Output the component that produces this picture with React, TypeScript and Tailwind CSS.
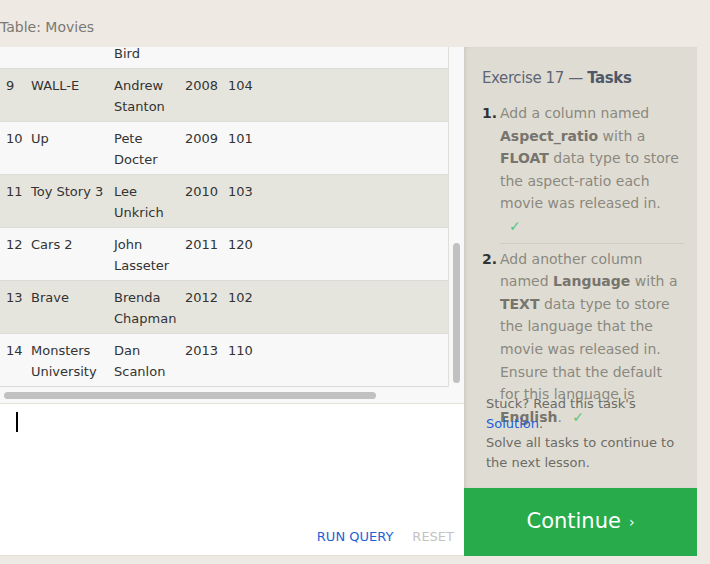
const rows = [
  { id: 8, title: ["Ratatouille"], director: ["Brad", "Bird"], year: 2007, len: 115 },
  { id: 9, title: ["WALL-E"], director: ["Andrew", "Stanton"], year: 2008, len: 104 },
  { id: 10, title: ["Up"], director: ["Pete", "Docter"], year: 2009, len: 101 },
  { id: 11, title: ["Toy Story 3"], director: ["Lee", "Unkrich"], year: 2010, len: 103 },
  { id: 12, title: ["Cars 2"], director: ["John", "Lasseter"], year: 2011, len: 120 },
  { id: 13, title: ["Brave"], director: ["Brenda", "Chapman"], year: 2012, len: 102 },
  { id: 14, title: ["Monsters", "University"], director: ["Dan", "Scanlon"], year: 2013, len: 110 },
];

function Row({ r }: { r: (typeof rows)[number] }) {
  const bg = r.id % 2 === 1 ? "bg-[#e6e5dd]" : "bg-[#f8f8f8]";
  return (
    <div className={`flex h-[53px] border-b border-[#dcdcd6] pt-[6px] leading-[21px] text-[13px] text-[#333] ${bg}`}>
      <div className="w-[31px] pl-[6px]">{r.id}</div>
      <div className="w-[83px]">
        {r.title.map((t) => (
          <div key={t}>{t}</div>
        ))}
      </div>
      <div className="w-[71px]">
        {r.director.map((t) => (
          <div key={t}>{t}</div>
        ))}
      </div>
      <div className="w-[43px]">{r.year}</div>
      <div className="flex-1">{r.len}</div>
    </div>
  );
}

export default function App() {
  return (
    <div className="h-[564px] w-[710px] overflow-hidden bg-[#eeeae3] font-['DejaVu_Sans',sans-serif]">
      <div className="h-[47px] pt-[17px] text-[14px] leading-[20px] text-[#7a7873]">Table: Movies</div>
      <div className="flex h-[509px] w-[697px]">
        <div className="flex w-[464px] flex-col">
          <div className="relative h-[356px] overflow-hidden bg-[#f8f8f8]">
            <div className="mt-[-31px] w-[449px] border-r border-[#e0e0da]">
              {rows.map((r) => (
                <Row key={r.id} r={r} />
              ))}
            </div>
            {/* scrollbars */}
            <div className="absolute left-[453px] top-[196px] h-[140px] w-[7px] rounded-full bg-[#c1c1c1]" />
            <div className="absolute left-[4px] top-[345px] h-[7px] w-[372px] rounded-full bg-[#c1c1c1]" />
          </div>
          <div className="relative flex h-[153px] flex-col border-t border-b border-[#e2e0d9] bg-white">
            <div className="ml-[16px] mt-[8px] h-[20px] w-[2px] bg-black" />
            <div className="mt-auto flex justify-end gap-[19px] pb-[8px] pr-[10px] text-[13px] font-medium leading-[20px]">
              <span className="text-[#1d63d4]">RUN QUERY</span>
              <span className="text-[#c3c3c3]">RESET</span>
            </div>
          </div>
        </div>
        <div className="flex w-[233px] flex-col">
          <div className="flex h-[441px] flex-col bg-[#dfddd3] pl-[18px] pr-[13px] shadow-[inset_3px_0_4px_-2px_rgba(0,0,0,0.12)]">
            <div className="pt-[20px] text-[15px] leading-[22px] tracking-[-0.4px] text-[#5e6676]">
              Exercise 17 — <span className="font-semibold text-[#4f5868]">Tasks</span>
            </div>
            <div className="mt-[13px] h-[292px] text-[14px] leading-[22.6px] text-[#8b8880]">
              <div className="flex">
                <span className="w-[18px] font-bold text-[#333]">1.</span>
                <div className="flex-1">
                  Add a column named <b className="font-semibold text-[#77746d]">Aspect_ratio</b> with a{" "}
                  <b className="font-semibold text-[#77746d]">FLOAT</b> data type to store the aspect-ratio each
                  movie was released in.
                  <div className="pl-[9px] text-[#5cc27a]">✓</div>
                </div>
              </div>
              <div className="ml-[18px] mt-[5px] border-t border-[#cfcdc3]" />
              <div className="mt-[4px] flex">
                <span className="w-[18px] font-bold text-[#333]">2.</span>
                <div className="flex-1">
                  Add another column named <b className="font-semibold text-[#77746d]">Language</b> with a{" "}
                  <b className="font-semibold text-[#77746d]">TEXT</b> data type to store the language that the
                  movie was released in. Ensure that the default for this language is{" "}
                  <b className="font-semibold text-[#77746d]">English</b>.{" "}
                  <span className="pl-[6px] text-[#5cc27a]">✓</span>
                </div>
              </div>
            </div>
            <div className="pl-[4px] text-[13px] leading-[19.5px] text-[#6d6b66]">
              <div>Stuck? Read this task's</div>
              <div>
                <span className="text-[#1a5fd8]">Solution</span>.
              </div>
              <div>Solve all tasks to continue to the next lesson.</div>
            </div>
          </div>
          <div className="flex h-[68px] items-center justify-center bg-[#28ab4b] text-[21px] text-white">
            Continue <span className="ml-[8px] text-[14px]">›</span>
          </div>
        </div>
      </div>
    </div>
  );
}
